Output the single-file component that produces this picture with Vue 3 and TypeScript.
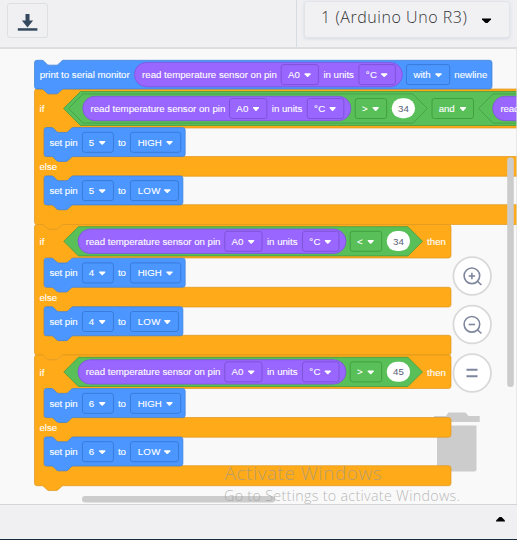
<script setup lang="ts">
interface Label { x: number; y: number; w: number; text: string; dark?: boolean }
interface Field { x: number; y: number; w: number; tone: string; text: string; tx: number; tw: number; arrow: number }
interface Statement { y: number; w: number; x: number; h: number }
interface Branch { y: number; width: number; header: number; alt: number; foot: number; end: number }

const S = 0.605
const notch = `c${2 * S},0 ${3 * S},${S} ${4 * S},${2 * S} l${4 * S},${4 * S} c${S},${S} ${2 * S},${2 * S} ${4 * S},${2 * S} h${12 * S} c${2 * S},0 ${3 * S},${-S} ${4 * S},${-2 * S} l${4 * S},${-4 * S} c${S},${-S} ${2 * S},${-2 * S} ${4 * S},${-2 * S}`
const tab = `c${-2 * S},0 ${-3 * S},${S} ${-4 * S},${2 * S} l${-4 * S},${4 * S} c${-S},${S} ${-2 * S},${2 * S} ${-4 * S},${2 * S} h${-12 * S} c${-2 * S},0 ${-3 * S},${-S} ${-4 * S},${-2 * S} l${-4 * S},${-4 * S} c${-S},${-S} ${-2 * S},${-2 * S} ${-4 * S},${-2 * S}`

function statementPath(b: Statement): string {
  const r = 2.4, right = b.x + b.w, bottom = b.y + b.h
  return `M${b.x},${b.y + r} q0,${-r} ${r},${-r} H${b.x + 7.3} ${notch} H${right - r} q${r},0 ${r},${r} V${bottom - r} q0,${r} ${-r},${r} H${b.x + 29} ${tab} H${b.x + r} q${-r},0 ${-r},${-r} Z`
}

function branchPath(b: Branch): string {
  const r = 2.4, x = 34.5, right = x + b.width, inner = 44
  const arm = (bottom: number) =>
    `H${right - r} q${r},0 ${r},${r} V${bottom - r} q0,${r} ${-r},${r}`
  const mouth = `H${inner + 29} ${tab} H${inner}`
  return `M${x},${b.y + r} q0,${-r} ${r},${-r} H${x + 7.3} ${notch} ${arm(b.header)} ${mouth} V${b.alt} ${arm(b.alt + 19.7)} ${mouth} V${b.foot} ${arm(b.end)} H${x + 29} ${tab} H${x + r} q${-r},0 ${-r},${-r} Z`
}

function hexagon(left: number, right: number, cy: number, half: number): string {
  return `M${left},${cy} L${left + half},${cy - half} H${right - half} L${right},${cy} L${right - half},${cy + half} H${left + half} Z`
}

const branches: Branch[] = [
  { y: 89, width: 560, header: 128, alt: 156.5, foot: 204.7, end: 224.5 },
  { y: 224.5, width: 416.5, header: 258, alt: 287.3, foot: 335.3, end: 355 },
  { y: 355, width: 416.5, header: 388.5, alt: 417.5, foot: 465.7, end: 485.7 },
]
const printBlock: Statement = { x: 34.5, y: 60.3, w: 457.5, h: 28.7 }

const labels: Label[] = []
const fields: Field[] = []
const pills: { x: number; w: number; y: number }[] = []
const values: { x: number; y: number }[] = []
const statements: Statement[] = []

function addSensor(x: number, cy: number) {
  pills.push({ x, w: 268, y: cy })
  labels.push({ x: x + 7.7, y: cy, w: 134.8, text: 'read temperature sensor on pin' })
  fields.push({ x: x + 146.8, y: cy, w: 37.2, tone: 'violet', text: 'A0', tx: x + 153.5, tw: 12, arrow: x + 173.2 })
  labels.push({ x: x + 189, y: cy, w: 30.5, text: 'in units' })
  fields.push({ x: x + 224.5, y: cy, w: 36.5, tone: 'violet', text: '°C', tx: x + 231.3, tw: 11.2, arrow: x + 249.8 })
}

function addCompare(x: number, cy: number, op: string, value: string) {
  fields.push({ x, y: cy, w: 31.5, tone: 'green', text: op, tx: x + 6.7, tw: 5.8, arrow: x + 20.5 })
  values.push({ x: x + 36.5, y: cy })
  labels.push({ x: x + 42.9, y: cy, w: 10.8, text: value, dark: true })
}

function addSetPin(top: number, pin: string, level: string) {
  const high = level === 'HIGH', cy = top + 14.7
  statements.push({ x: 44.2, y: top, w: high ? 141 : 138.7, h: 29 })
  labels.push({ x: 49.4, y: cy, w: 28.3, text: 'set pin' })
  fields.push({ x: 82.4, y: cy, w: 31, tone: 'blue', text: pin, tx: 88.8, tw: 5.8, arrow: 102.2 })
  labels.push({ x: 118, y: cy, w: 8, text: 'to' })
  fields.push({ x: 130.4, y: cy, w: high ? 50.3 : 48, tone: 'blue', text: level, tx: 137.7, tw: high ? 24 : 22.6, arrow: high ? 169.5 : 167.3 })
}

labels.push({ x: 39.7, y: 74.7, w: 90, text: 'print to serial monitor' })
addSensor(134.4, 74.6)
fields.push({ x: 406.4, y: 74.6, w: 43.3, tone: 'blue', text: 'with', tx: 413.5, tw: 17.2, arrow: 438.5 })
labels.push({ x: 454.3, y: 74.7, w: 33, text: 'newline' })

addSensor(82.8, 108.5)
addCompare(355.2, 108.5, '>', '34')
fields.push({ x: 432, y: 108.5, w: 41.5, tone: 'green', text: 'and', tx: 438.8, tw: 15.8, arrow: 463 })
pills.push({ x: 492.7, w: 268, y: 108.5 })
labels.push({ x: 500.4, y: 108.5, w: 19, text: 'read' })
addSensor(78, 241.3)
addCompare(350.2, 241.3, '<', '34')
addSensor(78, 371.9)
addCompare(350.2, 371.9, '>', '45')

labels.push(
  { x: 39.4, y: 108.5, w: 5, text: 'if' },
  { x: 39.4, y: 241.5, w: 5, text: 'if' },
  { x: 39.4, y: 372.5, w: 5, text: 'if' },
  { x: 427, y: 241.5, w: 19, text: 'then' },
  { x: 427, y: 372.5, w: 19, text: 'then' },
  { x: 39.4, y: 166.7, w: 17.8, text: 'else' },
  { x: 39.4, y: 297.7, w: 17.8, text: 'else' },
  { x: 39.4, y: 427.7, w: 17.8, text: 'else' },
)

addSetPin(127.6, '5', 'HIGH')
addSetPin(175.9, '5', 'LOW')
addSetPin(258.2, '4', 'HIGH')
addSetPin(306.8, '4', 'LOW')
addSetPin(388.6, '6', 'HIGH')
addSetPin(437, '6', 'LOW')

const slots = [
  hexagon(63.5, 660, 108.5, 17),
  hexagon(68.5, 427.4, 108.5, 14.6),
  hexagon(478.5, 830, 108.5, 14.6),
  hexagon(63.8, 422.5, 241.3, 14.6),
  hexagon(63.8, 422.5, 371.9, 14.6),
]
const zooms = [
  { cy: 276, kind: 'in' },
  { cy: 324.5, kind: 'out' },
  { cy: 373, kind: 'fit' },
]
</script>

<template>
  <div class="editor">
    <header class="toolbar">
      <div class="left">
        <button class="download" aria-label="Download">
          <svg width="22" height="18" viewBox="0 0 22 18">
            <path d="M8.500 0h4v6.500h3.600L10.500 13.500 4.900 6.500H8.500z" fill="#34495e" />
            <path d="M.8 14.200h19.600v2.500H.8z" fill="#34495e" />
          </svg>
        </button>
      </div>
      <div class="right">
        <button class="device">
          <span>1 (Arduino Uno R3)</span>
          <svg width="9" height="6" viewBox="0 0 9 6"><path d="M0 .5h9v1L5.500 5h-2L0 1.500z" fill="#000" /></svg>
        </button>
      </div>
    </header>

    <main class="workspace">
      <svg width="517" height="456" viewBox="0 48 517 456">
        <g fill="#ccc">
          <path d="M434 416h12l2.500-3.500h17l3 3.500h11.200v6H434z" />
          <path d="M437 425.600h39.500v43.400q0 2.500-2.500 2.500h-34.500q-2.500 0-2.500-2.500z" />
        </g>

        <path v-for="b in branches" :key="b.y" :d="branchPath(b)" class="control" />
        <path :d="statementPath(printBlock)" class="output" />
        <path v-for="s in statements" :key="s.y" :d="statementPath(s)" class="output" />
        <path v-for="(d, i) in slots" :key="i" :d="d" class="slot" />
        <rect v-for="(p, i) in pills" :key="i" :x="p.x" :y="p.y - 12.2" :width="p.w" height="24.4" rx="12.2" class="pill" />
        <rect v-for="(v, i) in values" :key="i" :x="v.x" :y="v.y - 10.2" width="23.400" height="20" rx="10" class="value" />

        <g v-for="(f, i) in fields" :key="i">
          <rect :x="f.x" :y="f.y - 10" :width="f.w" height="20" rx="2.400" class="field" :class="f.tone" />
          <text :x="f.tx" :y="f.y + 3.300" :textLength="f.tw" class="word">{{ f.text }}</text>
          <path :d="`M${f.arrow - 3},${f.y - 1.400} h6 v1 l-2.600,2.800 h-.8 l-2.600,-2.800 z`" fill="#fff" />
        </g>
        <text v-for="(l, i) in labels" :key="i" :x="l.x" :y="l.y + 3.300" :textLength="l.w" class="word" :class="{ dark: l.dark }">{{ l.text }}</text>

        <g v-for="z in zooms" :key="z.kind">
          <circle cx="472.200" :cy="z.cy" r="18.800" fill="#fff" stroke="#d9d9dc" stroke-width="1.800" />
          <g fill="none" stroke="#7d869c" stroke-width="1.600">
            <template v-if="z.kind !== 'fit'">
              <circle cx="471.900" :cy="z.cy - 0.200" r="7.800" />
              <path :d="`M477.200,${z.cy + 5} l4.200,4`" />
              <path :d="`M468.700,${z.cy} h6.400`" />
              <path v-if="z.kind === 'in'" :d="`M471.900,${z.cy - 3.200} v6.400`" />
            </template>
            <path v-else :d="`M466.500,${z.cy - 3.200} h11 M466.500,${z.cy + 3.300} h11`" stroke-width="2" />
          </g>
        </g>

        <rect x="507.200" y="157.500" width="6.600" height="229.500" rx="3" fill="#ccc" />
        <rect x="82" y="496" width="193" height="6.500" rx="3" fill="#ccc" />
        <path d="M516.500 48V504" stroke="#ddd" stroke-opacity=".6" />

        <g class="notice">
          <text x="224.500" y="479.700" font-size="19" textLength="157">Activate Windows</text>
          <text x="224" y="500.800" font-size="14.300" textLength="236">Go to Settings to activate Windows.</text>
        </g>
      </svg>
    </main>

    <footer class="console">
      <svg width="9" height="6" viewBox="0 0 9 6"><path d="M0 5.500h9v-1L5.500 1h-2L0 4.500z" fill="#000" /></svg>
    </footer>
  </div>
</template>

<style>
body { margin: 0; background: #f0f0f3; }
</style>

<style scoped>
.editor {
  width: 517px;
  height: 540px;
  display: flex;
  flex-direction: column;
  overflow: hidden;
  background: #f9f9f9;
}
.toolbar {
  box-sizing: border-box;
  height: 49px;
  flex: none;
  display: flex;
  background: #f0f0f3;
  border-bottom: 2px solid #dedee0;
}
.left {
  box-sizing: border-box;
  width: 297px;
  padding: 3px 0 0 7px;
  border-right: 1px solid #d7dce3;
}
.download {
  box-sizing: border-box;
  width: 41px;
  height: 35px;
  display: flex;
  justify-content: center;
  align-items: center;
  padding: 4px 0 0;
  border: 1px solid #dcdfe4;
  border-radius: 3px;
  background: #f0f0f3;
}
.right { padding: 1px 0 0 7px; }
.device {
  box-sizing: border-box;
  width: 206px;
  height: 37px;
  display: flex;
  align-items: center;
  justify-content: space-between;
  padding: 0 18px 5px 16px;
  border: 1px solid #e2e4ea;
  border-radius: 3px;
  background: #f1f1f4;
  box-shadow: 0 1px 3px rgba(140, 155, 185, .25);
  color: #333;
  font: 300 16px "Open Sans", sans-serif;
  letter-spacing: .55px;
  white-space: nowrap;
}
.device svg { margin-top: 8px; }
.workspace {
  height: 455px;
  flex: none;
  overflow: hidden;
}
.workspace svg { display: block; margin-top: -1px; }
.console {
  box-sizing: border-box;
  height: 36px;
  flex: none;
  display: flex;
  justify-content: flex-end;
  padding: 11px 12px 0 0;
  border-top: 1px solid #d5d5d8;
  border-bottom: 1px solid #172b3d;
  background: #f0f0f3;
}
.control { fill: #ffab19; stroke: #dc9620; stroke-width: .7; }
.output { fill: #4c97ff; stroke: #3d7fd6; stroke-width: .7; }
.slot { fill: #59c059; stroke: #419a41; stroke-width: .75; }
.pill { fill: #9966ff; stroke: #7d51d6; stroke-width: .75; }
.value { fill: #fff; }
.field { stroke-width: .75; }
.violet { fill: #9966ff; stroke: #774dcb; }
.green { fill: #59c059; stroke: #389438; }
.blue { fill: #4c97ff; stroke: #3373cc; }
.word {
  fill: #fff;
  stroke: #fff;
  stroke-width: .1px;
  font: 9.7px "Liberation Sans", Arial, sans-serif;
}
.dark { fill: #575e75; stroke: none; }
.notice {
  fill: #969696;
  fill-opacity: .68;
  font-family: "Open Sans", sans-serif;
  font-weight: 300;
}
</style>
